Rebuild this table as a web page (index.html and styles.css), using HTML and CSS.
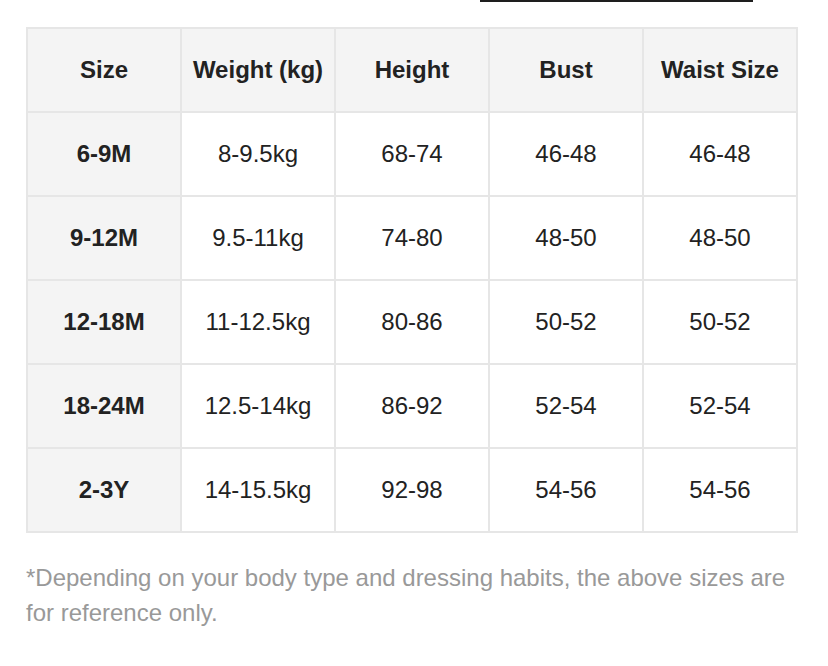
FILE: index.html
```html
<!DOCTYPE html>
<html>
<head>
<meta charset="utf-8">
<link rel="stylesheet" href="styles.css">
</head>
<body>
<div class="topline"></div>
<div class="wrap">
  <table class="sizes">
    <thead>
      <tr><th>Size</th><th>Weight (kg)</th><th>Height</th><th>Bust</th><th>Waist Size</th></tr>
    </thead>
    <tbody>
      <tr><th>6-9M</th><td>8-9.5kg</td><td>68-74</td><td>46-48</td><td>46-48</td></tr>
      <tr><th>9-12M</th><td>9.5-11kg</td><td>74-80</td><td>48-50</td><td>48-50</td></tr>
      <tr><th>12-18M</th><td>11-12.5kg</td><td>80-86</td><td>50-52</td><td>50-52</td></tr>
      <tr><th>18-24M</th><td>12.5-14kg</td><td>86-92</td><td>52-54</td><td>52-54</td></tr>
      <tr><th>2-3Y</th><td>14-15.5kg</td><td>92-98</td><td>54-56</td><td>54-56</td></tr>
    </tbody>
  </table>
  <p class="note">*Depending on your body type and dressing habits, the above sizes are for reference only.</p>
</div>
</body>
</html>
```

FILE: styles.css
```css
html, body {
  margin: 0;
  padding: 0;
  background: #ffffff;
}
body {
  font-family: "Liberation Sans", Arial, sans-serif;
  color: #222222;
}
.topline {
  margin-left: 480px;
  width: 273px;
  height: 2px;
  background: #1e1e1e;
}
.wrap {
  padding: 25px 0 0 26px;
  width: 772px;
}
.sizes {
  border-collapse: collapse;
  table-layout: fixed;
  width: 772px;
}
.sizes th,
.sizes td {
  border: 2px solid #e6e6e6;
  height: 82px;
  padding: 0;
  text-align: center;
  vertical-align: middle;
  font-size: 24px;
  line-height: 28px;
}
.sizes th {
  font-weight: bold;
  background: #f4f4f4;
}
.sizes td {
  font-weight: normal;
  background: #ffffff;
}
.note {
  margin: 27px 0 0 0;
  font-size: 24px;
  line-height: 35px;
  color: #999999;
}
```
